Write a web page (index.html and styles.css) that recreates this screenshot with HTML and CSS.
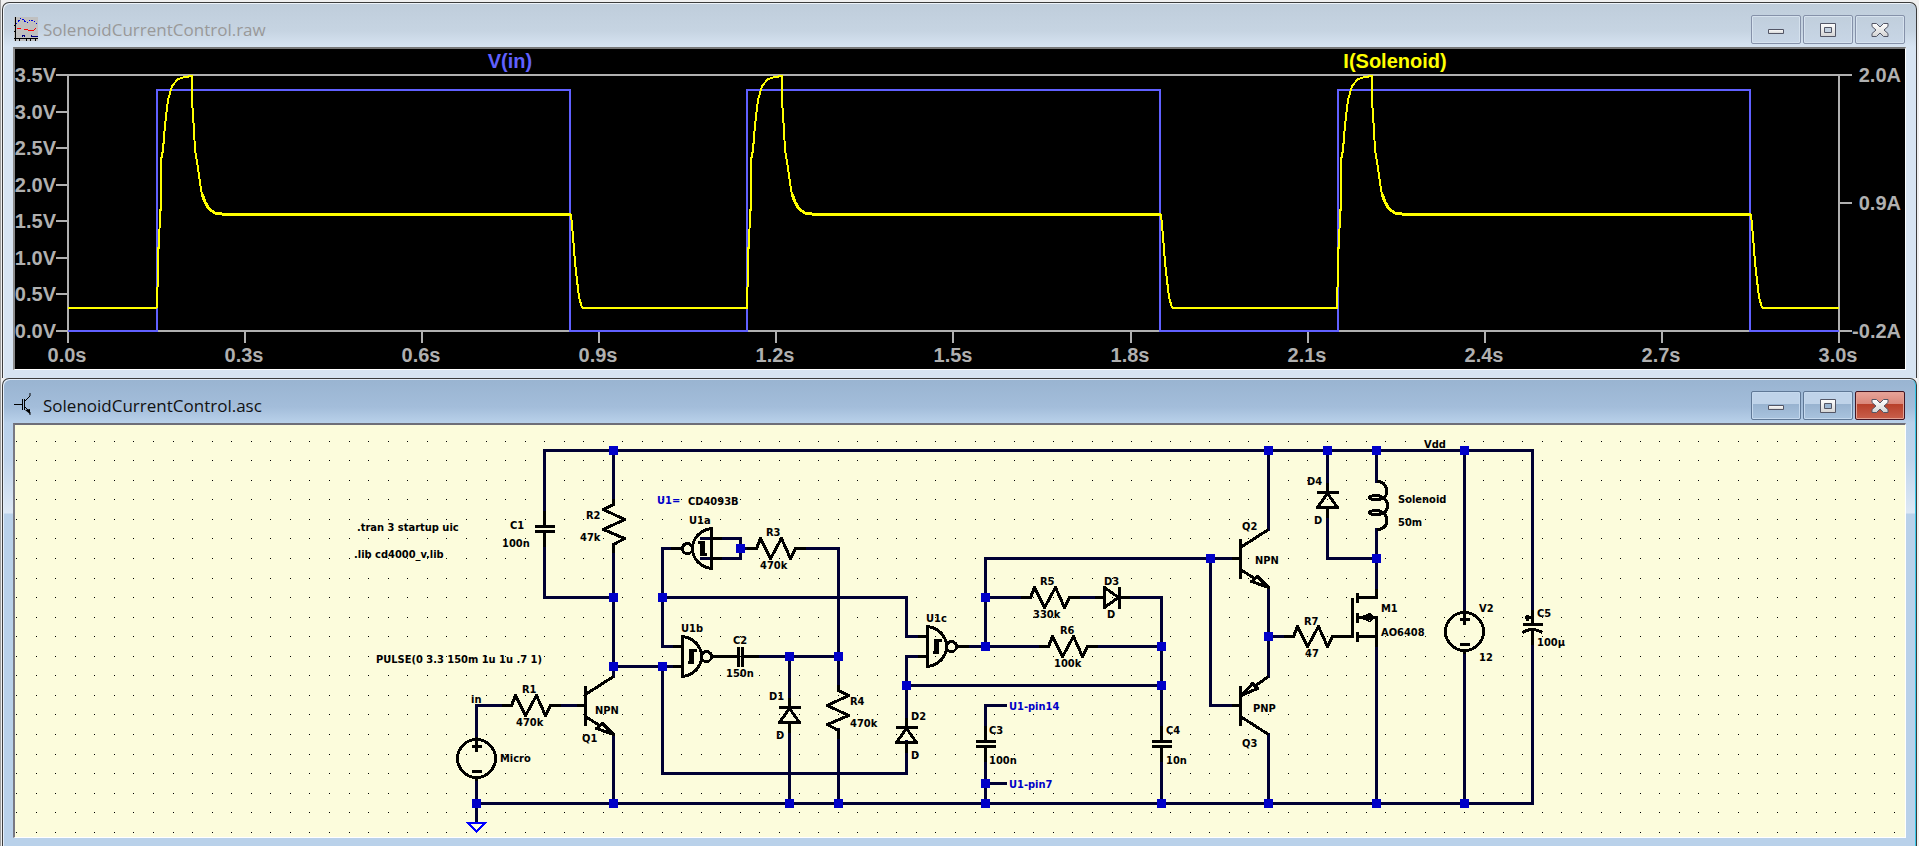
FILE: index.html
```html
<!DOCTYPE html>
<html lang="en">
<head>
<meta charset="utf-8">
<title>SolenoidCurrentControl</title>
<link rel="stylesheet" href="styles.css">
</head>
<body>
<main class="desktop">
  <section class="window window-inactive" aria-labelledby="raw-title">
    <header class="titlebar">
      <svg class="title-icon" viewBox="0 0 24 24" aria-hidden="true">
        <path fill="#c0c0c0" d="M0 0h24v24H0z"/>
        <g fill="none" shape-rendering="crispEdges">
          <path stroke="#0000e0" stroke-dasharray="2 1" d="M2 7l5-6 6 5 3-3h3l4 4"/>
          <path stroke="#f00" stroke-width="1" d="M3 11.500h4M10 12.500h3l2 1h4l3-2"/>
          <path stroke="#000080" stroke-width="1" d="M8 20v-2h2v2M17 19.500h7M17 18v2"/>
          <path stroke="#000" stroke-width="1" d="M1.500 0v24M0 21.500h24M0 8.500h2M0 14.500h2M5.500 22v2M12.500 22v2M16.500 22v2M21.500 22v2"/>
        </g>
      </svg>
      <h1 class="title" id="raw-title">SolenoidCurrentControl.raw</h1>
      <div class="controls">
        <button class="control" type="button" aria-label="Minimize"><svg class="glyph" viewBox="0 0 20 20"><use href="#minimize"/></svg></button>
        <button class="control" type="button" aria-label="Maximize"><svg class="glyph" viewBox="0 0 20 20"><use href="#maximize"/></svg></button>
        <button class="control" type="button" aria-label="Close"><svg class="glyph" viewBox="0 0 20 20"><use href="#close"/></svg></button>
      </div>
    </header>
    <div class="panel panel-plot">
      <svg class="canvas" viewBox="15 49 1890 320" role="img" aria-label="Waveforms of V(in) and I(Solenoid)">
        <defs>
          <g id="cycle">
            <path class="trace-i" d="M157 308V288L158 286V248H159L160 210H161V160L163 150L165 125L168 100L172 86L178 79L185 77L192 76V100L194 130L195 150L198 168L201 190L204 200"/>
            <path class="trace-i-thick" d="M202 194L205 202L209 209L215 213L222 214H571"/>
            <path class="trace-i" d="M571 214L573 237L575 262L577 280L579 297L582 308"/>
          </g>
        </defs>
        <g class="axes">
          <path d="M56 75H1852M56 331H1852M68 75V343M1839 75V343"/>
          <path d="M56 112H68M56 148H68M56 185H68M56 221H68M56 258H68M56 294H68M1839 203H1852"/>
          <path d="M245 331V343M422 331V343M599 331V343M776 331V343M953 331V343M1131 331V343M1308 331V343M1485 331V343M1662 331V343"/>
        </g>
        <path class="trace-v" d="M68 331H157V90H570V331H747V90H1160V331H1338V90H1750V331H1839"/>
        <path class="trace-i" d="M68 308H157M582 308H748M1172 308H1338M1762 308H1839"/>
        <use href="#cycle"/><use href="#cycle" x="590"/><use href="#cycle" x="1180"/>
        <g class="plot-text">
          <g text-anchor="end">
            <text x="56" y="82">3.5V</text><text x="56" y="119">3.0V</text><text x="56" y="155">2.5V</text><text x="56" y="192">2.0V</text>
            <text x="56" y="228">1.5V</text><text x="56" y="265">1.0V</text><text x="56" y="301">0.5V</text><text x="56" y="338">0.0V</text>
            <text x="1901" y="82">2.0A</text><text x="1901" y="210">0.9A</text><text x="1901" y="338">-0.2A</text>
          </g>
          <g text-anchor="middle">
            <text x="67" y="362">0.0s</text><text x="244" y="362">0.3s</text><text x="421" y="362">0.6s</text><text x="598" y="362">0.9s</text>
            <text x="775" y="362">1.2s</text><text x="953" y="362">1.5s</text><text x="1130" y="362">1.8s</text><text x="1307" y="362">2.1s</text>
            <text x="1484" y="362">2.4s</text><text x="1661" y="362">2.7s</text><text x="1838" y="362">3.0s</text>
            <text class="label-v" x="510" y="68">V(in)</text><text class="label-i" x="1395" y="68">I(Solenoid)</text>
          </g>
        </g>
      </svg>
    </div>
  </section>

  <section class="window window-active" aria-labelledby="asc-title">
    <header class="titlebar">
      <svg class="title-icon" viewBox="0 0 24 24" aria-hidden="true">
        <path fill="none" stroke="#000" d="M0 11.500h8M8.500 6v11M10.500 6v11M11 8l5-5v-3M11 14l5 5v3"/>
        <path d="M11 17l5-1v5z"/>
      </svg>
      <h2 class="title" id="asc-title">SolenoidCurrentControl.asc</h2>
      <div class="controls">
        <button class="control" type="button" aria-label="Minimize"><svg class="glyph" viewBox="0 0 20 20"><use href="#minimize"/></svg></button>
        <button class="control" type="button" aria-label="Maximize"><svg class="glyph" viewBox="0 0 20 20"><use href="#maximize"/></svg></button>
        <button class="control control-close" type="button" aria-label="Close"><svg class="glyph" viewBox="0 0 20 20"><use href="#close"/></svg></button>
      </div>
    </header>
    <div class="panel panel-schematic">
      <svg class="canvas" viewBox="15 425 1890 412" role="img" aria-label="Solenoid current control schematic">
        <defs>
          <linearGradient id="glyph-fill" x1="0" y1="0" x2="0" y2="1"><stop offset="0" stop-color="#fff"/><stop offset="1" stop-color="#d4d4d4"/></linearGradient>
          <g id="minimize"><path d="M2.500 9.500h15v4h-15z" fill="url(#glyph-fill)" stroke="#535666"/></g>
          <g id="maximize"><path fill="url(#glyph-fill)" fill-rule="evenodd" stroke="#535666" d="M2.500 3.500h15v13h-15zM6.500 7.500v5h7v-5z"/></g>
          <g id="close"><path fill="url(#glyph-fill)" stroke="#535666" stroke-linejoin="round" d="M2 3.500h4.500l3.500 3.500 3.500-3.500h4.500v3l-4 3.500 4 3.500v3h-4.500l-3.500-3.500-3.500 3.500h-4.500v-3l4-3.500-4-3.500z"/></g>
          <path id="res-h" d="M-10 0H0L4 -10L14 10L25 -10L34 10L39 0H49"/>
          <path id="res-v" d="M0 -6V0L-10 5L11 15L-10 25L11 34L0 40V48"/>
          <path id="cap" d="M0 -16V0M-10 0H10M-10 5H10M0 5V20"/>
          <path id="diode" d="M0 -10V0M-11 0H11M0 1L-10 15H10ZM0 15V25"/>
          <g id="npn"><path d="M-9 0H0M0 -20V20M0 -11L28 -29M0 11L14 20"/><path d="M17 18L11 23L28 29Z"/></g>
          <g id="pnp"><path d="M-9 0H0M0 -20V20M0 11L28 29M14 -19L28 -29"/><path d="M12 -22L17 -17L1 -10Z"/></g>
          <g id="source"><circle r="19"/><path d="M0 -22V-7M-5 -12H5M-5 13H5M0 19V22"/></g>
          <g id="nand">
            <path d="M-10 -10H0M-10 10H0M0 -20C11 -19 19 -10 19 0C19 10 11 19 0 20ZM29 0H41"/><circle cx="24" cy="0" r="5"/>
            <path d="M5 6H10V-6H14"/><path d="M8 6V-6H12"/>
          </g>
          <path id="node" d="M-4 -4H5V5H-4Z"/>
        </defs>
        <path class="grid" id="grid"/>
        <g class="lines" transform="translate(.5 .5)">
          <path class="wire" d="M544 526V450H1532V624M544 531V597H613M613 450V504M613 544V676M613 734V803M613 666H682
            M476 739V705H511M550 705H576M476 777V822M476 803H1532V629
            M662 548V646H672M662 548H675M662 597H906V636H917M662 666V773H906V741M701 538H740V558H701M740 548H756M795 548H838V690M838 729V803
            M722 656H738M742 656H838M789 656V707M789 722V803M917 656H906V727M906 685H1161
            M968 646H1048M1087 646H1161M985 646V558H1231M985 597H1030M1069 597H1104M1119 597H1161V741M1161 746V803
            M1005 705H985V741M985 746V803M985 783H1005M1210 558V705H1231
            M1268 450V529M1268 587V676M1268 734V803M1268 636H1293M1332 636H1352M1327 450V492M1327 507V558H1376M1376 450V481M1376 529V597M1376 636V803
            M1464 450V612M1464 650V803"/>
          <g class="part">
            <use href="#res-h" x="511" y="705"/><use href="#res-h" x="756" y="548"/><use href="#res-h" x="1030" y="597"/><use href="#res-h" x="1048" y="646"/><use href="#res-h" x="1293" y="636"/>
            <use href="#res-v" x="613" y="504"/><use href="#res-v" transform="translate(838 690) scale(-1 1)"/>
            <use href="#cap" x="544" y="526"/><use href="#cap" x="985" y="741"/><use href="#cap" x="1161" y="741"/>
            <path d="M722 656H738M738 646V666M742 646V666M742 656H758"/>
            <use href="#diode" x="789" y="707"/><use href="#diode" x="906" y="727"/><use href="#diode" x="1327" y="492"/>
            <use href="#diode" transform="translate(1119 597) rotate(90)"/>
            <use href="#npn" x="585" y="705"/><use href="#npn" x="1240" y="558"/><use href="#pnp" x="1240" y="705"/>
            <use href="#source" x="476" y="758"/><use href="#source" x="1464" y="631"/>
            <use href="#nand" x="682" y="656"/><use href="#nand" x="927" y="646"/><use href="#nand" transform="translate(711 548) scale(-1 1)"/>
            <path d="M1532 609V624M1522 624H1542M1522 632Q1532 626 1542 632M1532 629V644M1524 617H1531M1527 614V620"/>
            <path d="M1376 481C1388 481 1389 495 1382 498C1378 500 1369 499 1369 497C1369 495 1379 494 1382 497C1389 500 1388 511 1382 513C1378 515 1369 514 1369 512C1369 510 1379 509 1382 512C1389 517 1388 529 1376 529"/>
            <path d="M1342 636H1352V597M1357 592V602M1357 612V622M1357 631V641M1357 597H1376V588M1357 617H1376V646M1357 636H1376M1362 617L1369 614L1372 617L1369 620Z"/>
          </g>
          <path class="ground" d="M467 822H485L476 831Z"/>
        </g>
        <g class="nodes">
          <use href="#node" x="613" y="450"/><use href="#node" x="1268" y="450"/><use href="#node" x="1327" y="450"/><use href="#node" x="1376" y="450"/><use href="#node" x="1464" y="450"/>
          <use href="#node" x="613" y="597"/><use href="#node" x="662" y="597"/><use href="#node" x="613" y="666"/><use href="#node" x="662" y="666"/><use href="#node" x="740" y="548"/>
          <use href="#node" x="789" y="656"/><use href="#node" x="838" y="656"/><use href="#node" x="906" y="685"/><use href="#node" x="985" y="597"/><use href="#node" x="985" y="646"/>
          <use href="#node" x="1161" y="646"/><use href="#node" x="1161" y="685"/><use href="#node" x="1210" y="558"/><use href="#node" x="1376" y="558"/><use href="#node" x="1268" y="636"/><use href="#node" x="985" y="783"/>
          <use href="#node" x="476" y="803"/><use href="#node" x="613" y="803"/><use href="#node" x="789" y="803"/><use href="#node" x="838" y="803"/><use href="#node" x="985" y="803"/>
          <use href="#node" x="1161" y="803"/><use href="#node" x="1268" y="803"/><use href="#node" x="1376" y="803"/><use href="#node" x="1464" y="803"/>
        </g>
        <g class="part-text">
          <text x="357" y="531">.tran 3 startup uic</text><text x="354" y="558">.lib cd4000_v.lib</text><text x="376" y="663">PULSE(0 3.3 150m 1u 1u .7 1)</text>
          <text x="510" y="529">C1</text><text x="502" y="547">100n</text><text x="586" y="519">R2</text><text x="580" y="541">47k</text>
          <text x="471" y="703">in</text><text x="522" y="693">R1</text><text x="516" y="726">470k</text><text x="595" y="714">NPN</text><text x="582" y="742">Q1</text><text x="500" y="762">Micro</text>
          <text class="net" x="657" y="504">U1=</text><text x="688" y="505">CD4093B</text><text x="689" y="524">U1a</text><text x="766" y="536">R3</text><text x="760" y="569">470k</text>
          <text x="681" y="632">U1b</text><text x="733" y="644">C2</text><text x="726" y="677">150n</text><text x="769" y="700">D1</text><text x="776" y="739">D</text>
          <text x="850" y="705">R4</text><text x="850" y="727">470k</text><text x="911" y="720">D2</text><text x="911" y="759">D</text><text x="926" y="622">U1c</text>
          <text x="1040" y="585">R5</text><text x="1033" y="618">330k</text><text x="1104" y="585">D3</text><text x="1107" y="618">D</text><text x="1060" y="634">R6</text><text x="1054" y="667">100k</text>
          <text class="net" x="1009" y="710">U1-pin14</text><text class="net" x="1009" y="788">U1-pin7</text><text x="989" y="734">C3</text><text x="989" y="764">100n</text><text x="1166" y="734">C4</text><text x="1166" y="764">10n</text>
          <text x="1242" y="530">Q2</text><text x="1255" y="564">NPN</text><text x="1253" y="712">PNP</text><text x="1242" y="747">Q3</text>
          <text x="1307" y="485">D4</text><text x="1314" y="524">D</text><text x="1398" y="503">Solenoid</text><text x="1398" y="526">50m</text><text x="1424" y="448">Vdd</text>
          <text x="1304" y="625">R7</text><text x="1305" y="657">47</text><text x="1381" y="612">M1</text><text x="1381" y="636">AO6408</text>
          <text x="1479" y="612">V2</text><text x="1479" y="661">12</text><text x="1537" y="617">C5</text><text x="1537" y="646">100µ</text>
        </g>
      </svg>
    </div>
  </section>
</main>
<script src="grid.js"></script>
</body>
</html>
```

FILE: grid.js
```javascript
// Snap-grid dots, rounded to whole canvas units.
const pitch = 19.5625;
let dots = "";
for (let row = 0; row <= 20; row++) {
  for (let col = 0; col <= 96; col++) {
    const x = Math.round(16 + col * pitch);
    const y = Math.round(440.6 + row * pitch);
    dots += `M${x} ${y}h1v1h-1z`;
  }
}
document.getElementById("grid").setAttribute("d", dots);
```

FILE: styles.css
```css
* { box-sizing: border-box; }

body {
  margin: 0;
  background: #f0f0f0;
}

.desktop {
  display: flex;
  flex-direction: column;
  min-height: 100vh;
  padding: 2px 2px 0 1px;
  border-left: 1px solid #a0a0a0;
  overflow: hidden;
}

.window {
  border: 1px solid #3c3c3c;
  border-bottom: 0;
  border-radius: 7px 7px 0 0;
  padding: 0 10px 8px;
}

.window-inactive {
  background: linear-gradient(#bfcddb, #c6d4e2 28px, #d7e4f2 44px);
  box-shadow: inset 1px 1px #eef4fa;
  color: #999;
}

.window-active {
  flex: 1;
  background: linear-gradient(#99b4d1, #a3bdda 28px, #b9d1ea 44px, #bfd4ec 80px, #dde8f5 134px, #b9d1ea 135px);
  box-shadow: inset 1px 1px #e4eefa, inset -1px 0 #35c8e8;
  color: #111;
}

.titlebar {
  display: flex;
  align-items: center;
  gap: 5px;
  height: 44px;
  padding: 0 1px;
}

.title-icon {
  width: 24px;
  height: 24px;
  margin-top: 8px;
}

.title {
  flex: 1;
  margin: 10px 0 0;
  font: 400 17px/24px "Open Sans", "Noto Sans", sans-serif;
}

.controls {
  display: flex;
  align-self: flex-start;
  gap: 2px;
  margin-top: 12px;
}

.control {
  display: grid;
  place-items: center;
  width: 50px;
  height: 29px;
  padding: 0;
  border: 1px solid #8591a9;
  border-radius: 2px;
  background: linear-gradient(#c0cedc, #c8d6e6);
  box-shadow: inset 0 0 0 1px #d6e2ee;
}

.window-active .control {
  border-color: #5f7896;
  background: linear-gradient(#bfd3e9 46%, #98b3d0 46%, #a9c3de);
  box-shadow: inset 0 0 0 1px #c5d9ee;
}

.window-active .control-close {
  border-color: #431422;
  background: linear-gradient(#e8a49a, #d98678 46%, #b8402a 46%, #c9604c);
  box-shadow: inset 0 0 0 1px #e3a193;
}

.glyph {
  width: 20px;
  height: 20px;
}

.panel {
  border: solid;
  border-width: 2px 1px 1px 2px;
  border-color: #787878 #fff #fff #8c8c8c;
}

.panel-plot { background: #000; }

.panel-schematic {
  background: #fcfcdc;
  border-color: #6e6e78 #fff #fff #787882;
}

.canvas {
  display: block;
  width: 100%;
  height: auto;
}

.axes {
  fill: none;
  stroke: #b0b0b0;
  stroke-width: 2px;
  shape-rendering: crispEdges;
}

.trace-v, .trace-i, .trace-i-thick {
  fill: none;
  stroke-width: 2px;
  shape-rendering: crispEdges;
}

.trace-v { stroke: #6060ff; }
.trace-i, .trace-i-thick { stroke: #ff0; }
.trace-i-thick { stroke-width: 3px; }

.plot-text {
  fill: #b0b0b0;
  font: 700 20px "Liberation Sans", Arial, sans-serif;
}

.label-v { fill: #6060ff; }
.label-i { fill: #ff0; }

.grid, .lines, .nodes { shape-rendering: crispEdges; }
.lines { fill: none; stroke-width: 3px; }
.wire { stroke: #000034; stroke-linecap: round; }
.part { stroke: #000; stroke-linejoin: round; }
.ground { stroke: #00f; stroke-width: 2px; }
.nodes { fill: #0000c8; }

.part-text {
  fill: #000;
  font: 700 11px "DejaVu Sans Condensed", Tahoma, "Open Sans", sans-serif;
}

.net { fill: #0000c8; }
```
